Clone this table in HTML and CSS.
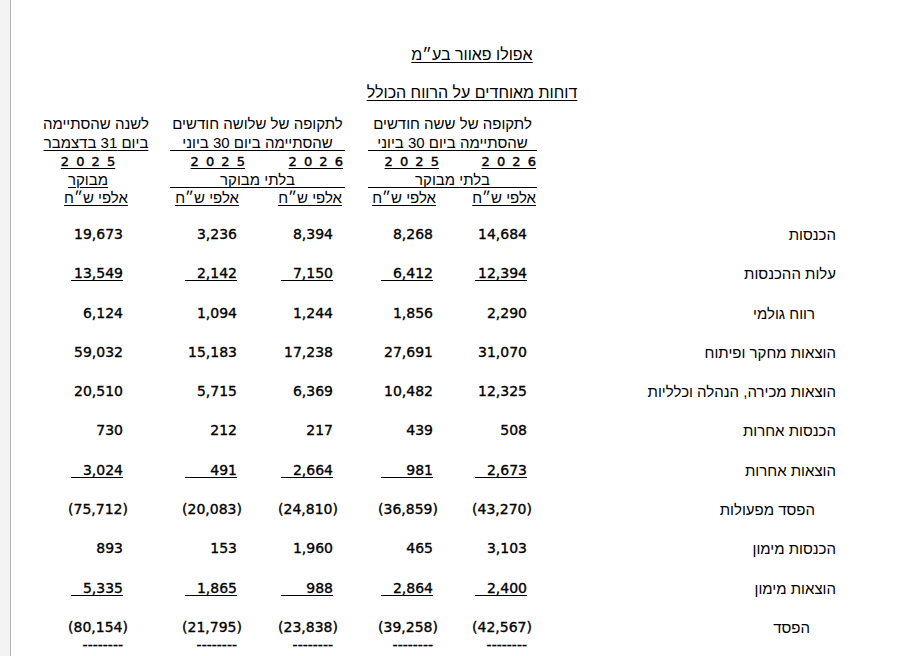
FILE: index.html
```html
<!DOCTYPE html>
<html lang="he">
<head>
<meta charset="utf-8">
<title>אפולו פאוור בע״מ - דוחות מאוחדים על הרווח הכולל</title>
<link rel="stylesheet" href="styles.css">
</head>
<body>
<div class="frame">
  <aside class="strip"></aside>
  <main class="page" dir="rtl">
    <h1 class="title t1">אפולו פאוור בע״מ</h1>
    <h2 class="title t2">דוחות מאוחדים על הרווח הכולל</h2>

    <div class="grid head">
      <div class="g6 ctr">לתקופה של ששה חודשים</div>
      <div class="g3 ctr">לתקופה של שלושה חודשים</div>
      <div class="c8 ctr">לשנה שהסתיימה</div>

      <div class="g6 ctr rule">שהסתיימה ביום 30 ביוני</div>
      <div class="g3 ctr rule">שהסתיימה ביום 30 ביוני</div>
      <div class="c8 ctr"><span class="ul">ביום 31 בדצמבר</span></div>

      <div class="c2 h2"><span class="ul yr">2 0 2 6</span></div>
      <div class="c3 h3"><span class="ul yr">2 0 2 5</span></div>
      <div class="c5 h5"><span class="ul yr">2 0 2 6</span></div>
      <div class="c6 h6"><span class="ul yr">2 0 2 5</span></div>
      <div class="c8 ctr shift"><span class="ul yr">2 0 2 5</span></div>

      <div class="g6 ctr rule">בלתי מבוקר</div>
      <div class="g3 ctr rule">בלתי מבוקר</div>
      <div class="c8 ctr shift"><span class="ul">מבוקר</span></div>

      <div class="c2 a2"><span class="ul">אלפי ש״ח</span></div>
      <div class="c3 a3"><span class="ul">אלפי ש״ח</span></div>
      <div class="c5 a5"><span class="ul">אלפי ש״ח</span></div>
      <div class="c6 a6"><span class="ul">אלפי ש״ח</span></div>
      <div class="c8 ctr"><span class="ul">אלפי ש״ח</span></div>
    </div>

    <div class="grid body">
      <div class="c1 lab">הכנסות</div>
      <div class="c2 n"><span class="v">14,684</span></div>
      <div class="c3 n"><span class="v">8,268</span></div>
      <div class="c5 n"><span class="v">8,394</span></div>
      <div class="c6 n"><span class="v">3,236</span></div>
      <div class="c8 n"><span class="v">19,673</span></div>

      <div class="c1 lab">עלות ההכנסות</div>
      <div class="c2 n"><span class="v u">12,394</span></div>
      <div class="c3 n"><span class="v u">6,412</span></div>
      <div class="c5 n"><span class="v u">7,150</span></div>
      <div class="c6 n"><span class="v u">2,142</span></div>
      <div class="c8 n"><span class="v u">13,549</span></div>

      <div class="c1 lab ind">רווח גולמי</div>
      <div class="c2 n"><span class="v">2,290</span></div>
      <div class="c3 n"><span class="v">1,856</span></div>
      <div class="c5 n"><span class="v">1,244</span></div>
      <div class="c6 n"><span class="v">1,094</span></div>
      <div class="c8 n"><span class="v">6,124</span></div>

      <div class="c1 lab">הוצאות מחקר ופיתוח</div>
      <div class="c2 n"><span class="v">31,070</span></div>
      <div class="c3 n"><span class="v">27,691</span></div>
      <div class="c5 n"><span class="v">17,238</span></div>
      <div class="c6 n"><span class="v">15,183</span></div>
      <div class="c8 n"><span class="v">59,032</span></div>

      <div class="c1 lab">הוצאות מכירה, הנהלה וכלליות</div>
      <div class="c2 n"><span class="v">12,325</span></div>
      <div class="c3 n"><span class="v">10,482</span></div>
      <div class="c5 n"><span class="v">6,369</span></div>
      <div class="c6 n"><span class="v">5,715</span></div>
      <div class="c8 n"><span class="v">20,510</span></div>

      <div class="c1 lab">הכנסות אחרות</div>
      <div class="c2 n"><span class="v">508</span></div>
      <div class="c3 n"><span class="v">439</span></div>
      <div class="c5 n"><span class="v">217</span></div>
      <div class="c6 n"><span class="v">212</span></div>
      <div class="c8 n"><span class="v">730</span></div>

      <div class="c1 lab">הוצאות אחרות</div>
      <div class="c2 n"><span class="v u">2,673</span></div>
      <div class="c3 n"><span class="v u">981</span></div>
      <div class="c5 n"><span class="v u">2,664</span></div>
      <div class="c6 n"><span class="v u">491</span></div>
      <div class="c8 n"><span class="v u">3,024</span></div>

      <div class="c1 lab ind">הפסד מפעולות</div>
      <div class="c2 n"><span class="v neg">(43,270)</span></div>
      <div class="c3 n"><span class="v neg">(36,859)</span></div>
      <div class="c5 n"><span class="v neg">(24,810)</span></div>
      <div class="c6 n"><span class="v neg">(20,083)</span></div>
      <div class="c8 n"><span class="v neg">(75,712)</span></div>

      <div class="c1 lab">הכנסות מימון</div>
      <div class="c2 n"><span class="v">3,103</span></div>
      <div class="c3 n"><span class="v">465</span></div>
      <div class="c5 n"><span class="v">1,960</span></div>
      <div class="c6 n"><span class="v">153</span></div>
      <div class="c8 n"><span class="v">893</span></div>

      <div class="c1 lab">הוצאות מימון</div>
      <div class="c2 n"><span class="v u">2,400</span></div>
      <div class="c3 n"><span class="v u">2,864</span></div>
      <div class="c5 n"><span class="v u">988</span></div>
      <div class="c6 n"><span class="v u">1,865</span></div>
      <div class="c8 n"><span class="v u">5,335</span></div>

      <div class="c1 lab ind2">הפסד</div>
      <div class="c2 n"><span class="v neg">(42,567)</span></div>
      <div class="c3 n"><span class="v neg">(39,258)</span></div>
      <div class="c5 n"><span class="v neg">(23,838)</span></div>
      <div class="c6 n"><span class="v neg">(21,795)</span></div>
      <div class="c8 n"><span class="v neg">(80,154)</span></div>
    </div>

    <div class="grid foot">
      <div class="c2 n"><span class="v">--------</span></div>
      <div class="c3 n"><span class="v">--------</span></div>
      <div class="c5 n"><span class="v">--------</span></div>
      <div class="c6 n"><span class="v">--------</span></div>
      <div class="c8 n"><span class="v">--------</span></div>
    </div>
  </main>
</div>
</body>
</html>
```

FILE: styles.css
```css
html, body {
  margin: 0;
  padding: 0;
  background: #ffffff;
  overflow: hidden;
}

body {
  font-family: "Liberation Sans", Arial, sans-serif;
  color: #000000;
}

.frame {
  display: flex;
  height: 656px;
}

.strip {
  flex: none;
  width: 10px;
  background: #f3f3f3;
  border-right: 1px solid #b4b4b4;
}

.page {
  flex: 1;
  min-width: 0;
  direction: rtl;
  padding: 45px 72px 0 0;
}

.title {
  margin: 0 -72px 0 0;
  padding: 0 0 0 25px;
  font-size: 16px;
  font-weight: normal;
  line-height: 19px;
  text-align: center;
  text-decoration: underline;
  text-underline-offset: 2px;
}

.t1 { margin-bottom: 19px; }
.t2 { margin-bottom: 14px; }

.grid {
  display: grid;
  grid-template-columns: 299px 85px 84px 23px 90px 85px 15px 118px;
  width: 799px;
}

.c1 { grid-column: 1; }
.c2 { grid-column: 2; }
.c3 { grid-column: 3; }
.c5 { grid-column: 5; }
.c6 { grid-column: 6; }
.c8 { grid-column: 8; }
.g6 { grid-column: 2 / 4; }
.g3 { grid-column: 5 / 7; }

/* header */
.head {
  grid-auto-rows: 16px;
  row-gap: 2.5px;
  font-size: 15px;
  line-height: 16px;
  white-space: nowrap;
}

.ctr { text-align: center; }
.rule { border-bottom: 1px solid #000; }

.ul {
  text-decoration: underline;
  text-underline-offset: 2px;
}

.yr {
  display: inline-block;
  direction: ltr;
  unicode-bidi: isolate;
  font-family: "DejaVu Sans", sans-serif;
  font-size: 13px;
  word-spacing: 3px;
  -webkit-text-stroke: 0.4px #000;
}

.shift { padding-right: 16px; }

.h2 { padding-right: 1px; }
.h3 { padding-right: 13px; }
.h5 { padding-right: 2px; }
.h6 { padding-right: 10px; }

.a2 { padding-right: 1px; }
.a3 { padding-right: 16px; }
.a5 { padding-right: 3px; }
.a6 { padding-right: 16px; }

/* body */
.body {
  margin-top: 9px;
  grid-auto-rows: 39.3px;
  line-height: 39.3px;
}

.lab {
  font-size: 15px;
  white-space: nowrap;
}

.ind { padding-right: 21px; }
.ind2 { padding-right: 26px; }

.n {
  font-family: "DejaVu Sans", sans-serif;
  font-size: 14px;
  -webkit-text-stroke: 0.35px #000;
  white-space: nowrap;
}

.n.c2 { padding-right: 10px; }
.n.c3 { padding-right: 19px; }
.n.c5 { padding-right: 12px; }
.n.c6 { padding-right: 18px; }
.n.c8 { padding-right: 32px; }

.v {
  display: inline-block;
  direction: ltr;
  unicode-bidi: isolate;
  text-align: right;
}

.u {
  width: 52px;
  line-height: 14px;
  border-bottom: 1px solid #000;
}

.neg { margin-right: -5px; }

.foot {
  margin-top: -9.8px;
  line-height: 16px;
}
```
